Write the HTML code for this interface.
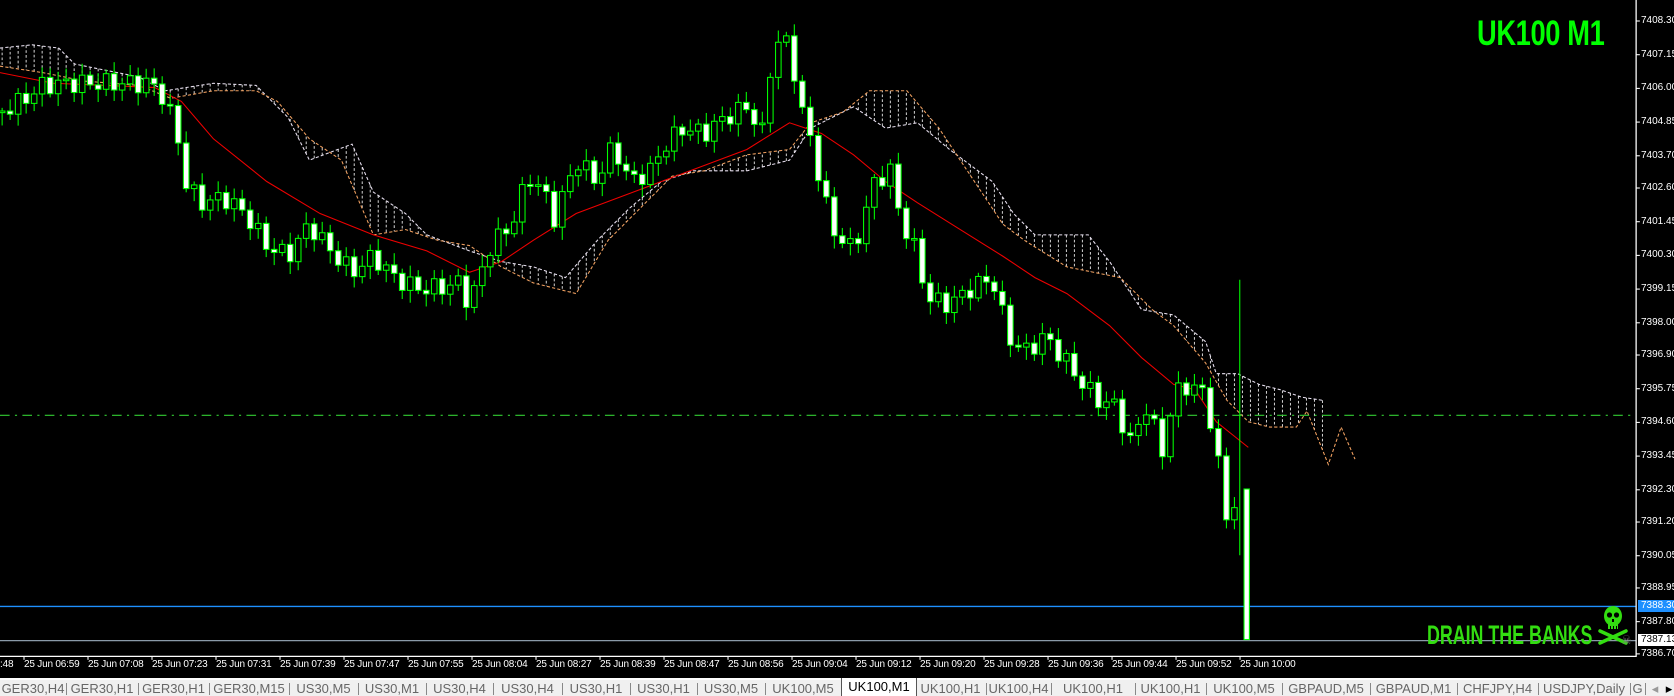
<!DOCTYPE html>
<html><head><meta charset="utf-8"><style>
html,body{margin:0;padding:0;background:#000;width:1674px;height:694px;overflow:hidden;font-family:"Liberation Sans",sans-serif}
#chart{position:absolute;left:0;top:0}
.ax{position:absolute;color:#fff;font-size:10px;line-height:12px;white-space:nowrap}
.tx{position:absolute;color:#fff;font-size:10px;line-height:12px;white-space:nowrap;letter-spacing:-0.2px}
.tabs{position:absolute;left:0;top:678px;width:1674px;height:16px;background:#f0f0f0;border-top:2px solid #fff}
.tab{position:absolute;top:0;height:16px;font-size:13px;color:#666;text-align:center;line-height:17px;white-space:nowrap;overflow:hidden}
.sep{position:absolute;top:3px;width:1px;height:12px;background:#888}
</style></head><body>
<svg id="chart" width="1674" height="694" viewBox="0 0 1569 650" preserveAspectRatio="none">
<g id="cloud"></g>
<line x1="0" y1="389" x2="1533" y2="389" stroke="#3c3" stroke-width="1" stroke-dasharray="9,5,2,5"/>
<line x1="0" y1="568" x2="1533" y2="568" stroke="#1e90ff" stroke-width="1.2"/>
<line x1="0" y1="600" x2="1533" y2="600" stroke="#8a9aa8" stroke-width="1.2"/>
<polyline id="ma" fill="none" stroke="#e00" stroke-width="1"/>
<g id="cdl"></g>
<line x1="1533.5" y1="0" x2="1533.5" y2="615" stroke="#fff" stroke-width="1.2"/>
<line x1="0" y1="614.8" x2="1534" y2="614.8" stroke="#fff" stroke-width="1.2"/>
<g id="ticks" stroke="#fff" stroke-width="1"></g>
</svg>
<div id="lbl"></div>
<div style="position:absolute;left:1477px;top:14px;font-size:35px;font-weight:bold;color:#00ff00;transform:scaleX(0.78);transform-origin:0 0;letter-spacing:-0.5px;white-space:nowrap">UK100 M1</div>
<div style="position:absolute;left:1427px;top:620px;font-size:27px;font-weight:bold;color:#33dd11;transform:scaleX(0.66);transform-origin:0 0;white-space:nowrap;line-height:30px">DRAIN THE BANKS</div>
<svg style="position:absolute;left:1596px;top:604px" width="36" height="42" viewBox="0 0 36 42">
<g fill="#33dd11"><ellipse cx="17" cy="12" rx="9" ry="10"/><rect x="12" y="18" width="10" height="7"/></g>
<g fill="#000"><circle cx="13.5" cy="11" r="2.6"/><circle cx="20.5" cy="11" r="2.6"/><rect x="16" y="15" width="2" height="3"/><rect x="14" y="22" width="1" height="3"/><rect x="17" y="22" width="1" height="3"/><rect x="20" y="22" width="1" height="3"/></g>
<g stroke="#33dd11" stroke-width="3.5" stroke-linecap="round"><line x1="4" y1="27" x2="30" y2="39"/><line x1="30" y1="27" x2="4" y2="39"/></g>
</svg>
<div style="position:absolute;left:1621px;top:633px;font-size:12px;color:#777;line-height:14px;font-family:'DejaVu Sans',sans-serif">☠</div>
<div class="tabs" id="tabs"></div>
<script>
(function(){
var NS="http://www.w3.org/2000/svg";
function el(t,a,p){var e=document.createElementNS(NS,t);for(var k in a)e.setAttribute(k,a[k]);p.appendChild(e);return e;}
function interp(pts,x){if(x<=pts[0][0])return pts[0][1];for(var i=1;i<pts.length;i++){if(x<=pts[i][0]){var a=pts[i-1],b=pts[i];return a[1]+(b[1]-a[1])*(x-a[0])/(b[0]-a[0]);}}return pts[pts.length-1][1];}
var close=[[0,105],[20,95],[40,80],[60,78],[100,78],[140,78],[150,85],[165,120],[175,175],[190,190],[210,185],[230,200],[250,230],[270,240],[290,210],[310,235],[330,255],[350,240],[370,260],[390,270],[410,270],[430,265],[440,285],[460,230],[480,210],[495,165],[510,180],[520,205],[540,150],[560,170],[575,135],[590,170],[610,160],[620,140],[640,120],[660,125],[680,110],[700,100],[715,125],[725,40],[740,40],[750,100],[760,130],[770,175],[780,215],[800,235],[820,170],[835,160],[845,210],[855,225],[870,280],[890,285],[910,270],[930,260],[945,315],[960,330],[980,315],[1000,340],[1015,360],[1030,375],[1045,380],[1060,415],[1075,380],[1090,425],[1100,370],[1115,360],[1130,370],[1140,420],[1150,490],[1160,460]];
var ma=[[0,68],[50,78],[100,80],[145,82],[170,95],[200,130],[250,170],[300,200],[350,220],[400,235],[440,255],[470,245],[500,225],[540,200],[580,185],[620,170],[660,155],[700,140],[740,115],[770,125],[800,145],[830,170],[860,190],[900,215],[940,240],[970,260],[1000,275],[1040,305],[1070,335],[1100,360],[1120,365],[1140,395],[1170,419]];
var up=[[0,45],[30,42],[55,45],[70,60],[130,72],[155,85],[200,78],[240,80],[270,110],[290,150],[330,135],[350,180],[380,200],[400,220],[440,235],[470,245],[500,250],[530,260],[560,225],[590,195],[620,170],[650,160],[700,160],[740,150],[760,120],[800,100],[830,120],[860,115],[890,140],[930,170],[950,200],[970,220],[1020,220],[1040,245],[1070,290],[1100,295],[1130,320],[1140,350],[1160,350],[1180,360],[1200,365],[1220,372],[1240,375]];
var lo=[[0,62],[40,68],[80,76],[130,80],[160,92],[200,85],[240,85],[260,95],[290,130],[320,150],[350,220],[380,215],[410,225],[440,230],[470,250],[500,265],[540,275],[570,225],[600,195],[630,165],[660,160],[700,145],[740,140],[760,115],[790,105],[815,85],[850,85],[880,120],[900,150],[940,210],[960,225],[1000,250],[1050,260],[1080,290],[1100,305],[1130,340],[1150,375],[1170,395],[1190,400],[1215,400],[1225,385],[1245,435],[1257,400],[1270,430]];
var cloud=document.getElementById('cloud');
for(var x=2;x<1240;x+=7.5){var a=interp(up,x),b=interp(lo,x);el('line',{x1:x,y1:a,x2:x,y2:b,stroke:'#ddd','stroke-width':0.9,'stroke-dasharray':'2.5,2'},cloud);}
function pl(pts,c,p){el('polyline',{points:pts.map(function(q){return q.join(',')}).join(' '),fill:'none',stroke:c,'stroke-width':1,'stroke-dasharray':'3,2'},p);}
pl(up,'#e8e0f0',cloud);pl(lo,'#f0a060',cloud);
document.getElementById('ma').setAttribute('points',ma.map(function(q){return q.join(',')}).join(' '));
var g=document.getElementById('cdl');var prev=105;
for(var i=0;i<155;i++){var cx=2+i*7.5;var c=interp(close,cx)+Math.sin(i*2.3)*9;var o=prev;prev=c;
 var bt=Math.min(o,c),bb=Math.max(o,c);if(bb-bt<1.5)bb=bt+1.5;
 var hi=bt-3-Math.abs(Math.sin(i*1.7))*8,lw=bb+3+Math.abs(Math.cos(i*1.3))*9;
 el('line',{x1:cx,y1:hi,x2:cx,y2:lw,stroke:'#0f0','stroke-width':1},g);
 el('rect',{x:cx-2.6,y:bt,width:5.2,height:bb-bt,fill:(c>o?'#fff':'#000'),stroke:'#0f0','stroke-width':1},g);}
el('line',{x1:1162,y1:262,x2:1162,y2:520,stroke:'#0f0','stroke-width':1},g);
el('rect',{x:1166,y:458,width:5,height:141,fill:'#fff',stroke:'#0f0','stroke-width':1},g);
var L=document.getElementById('lbl'),h='';
var vals=['7408.30','7407.15','7406.00','7404.85','7403.70','7402.60','7401.45','7400.30','7399.15','7398.00','7396.90','7395.75','7394.60','7393.45','7392.30','7391.20','7390.05','7388.95','7387.80','7386.70'];
var tk=document.getElementById('ticks');
vals.forEach(function(v){var y=21+(7408.30-parseFloat(v))*29.3;h+='<div class="ax" style="left:1641px;top:'+(y-6)+'px">'+v+'</div>';el('line',{x1:1533.5,y1:y/1.0677,x2:1537,y2:y/1.0677},tk);});
h+='<div class="ax" style="left:1638px;top:600px;background:#1e90ff;padding:0 3px;width:40px">7388.30</div>';
h+='<div class="ax" style="left:1638px;top:634px;background:#fff;color:#000;padding:0 3px;width:40px">7387.13</div>';
var tl=['06:59','07:08','07:23','07:31','07:39','07:47','07:55','08:04','08:27','08:39','08:47','08:56','09:04','09:12','09:20','09:28','09:36','09:44','09:52','10:00'];
h+='<div class="tx" style="left:0;top:659px">:48</div>';
tl.forEach(function(t,k){var x=24+64*k;h+='<div class="tx" style="left:'+x+'px;top:659px">25 Jun '+t+'</div>';el('line',{x1:x/1.0669,y1:615,x2:x/1.0669,y2:618},tk);});
L.innerHTML=h;
var tabs=[['GER30,H4',0,66],['GER30,H1',66,138],['GER30,H1',138,209],['GER30,M15',209,289],['US30,M5',289,358],['US30,M1',358,426],['US30,H4',426,493],['US30,H4',493,562],['US30,H1',562,630],['US30,H1',630,697],['US30,M5',697,765],['UK100,M5',765,841],['UK100,M1',841,915],['UK100,H1',915,986],['UK100,H4',986,1051],['UK100,H1',1051,1135],['UK100,H1',1135,1206],['UK100,M5',1206,1282],['GBPAUD,M5',1282,1370],['GBPAUD,M1',1370,1457],['CHFJPY,H4',1457,1538],['USDJPY,Daily',1538,1630],['G',1630,1645]];
var T='';tabs.forEach(function(t){var act=t[1]==841;
 T+='<div class="tab" style="left:'+t[1]+'px;width:'+(t[2]-t[1])+'px;'+(act?'background:#fff;color:#000;top:-2px;height:18px;border-left:1px solid #555;border-right:1px solid #555;':'')+'">'+t[0]+'</div>';
 if(!act)T+='<div class="sep" style="left:'+t[2]+'px"></div>';});
T+='<div class="tab" style="left:1650px;width:10px;color:#999">◂</div><div class="tab" style="left:1664px;width:10px;color:#000">▸</div>';
document.getElementById('tabs').innerHTML=T;
})();
</script>
</body></html>
